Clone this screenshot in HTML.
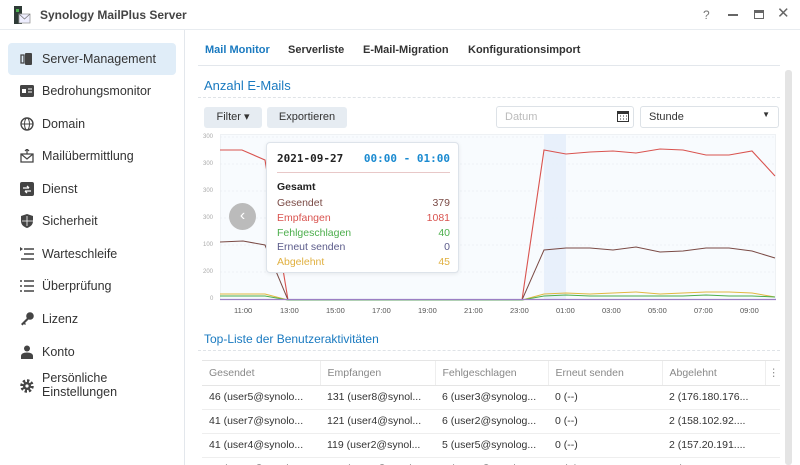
<!DOCTYPE html>
<html><head><meta charset="utf-8"><style>
*{box-sizing:border-box;margin:0;padding:0}
body{width:800px;height:465px;overflow:hidden;background:#fff;font-family:"Liberation Sans","DejaVu Sans",sans-serif;position:relative;color:#333}
.abs{position:absolute}
.title{left:40px;top:8px;font-size:12px;font-weight:bold;color:#444}
.hdrline{left:0;top:29px;width:800px;height:1px;background:#e8ecf0}
.side{left:0;top:30px;width:185px;height:435px;border-right:1px solid #e3e7ec}
.item{position:absolute;left:8px;width:168px;height:32px;font-size:12.5px;color:#333;padding-left:34px;line-height:32px}
.item.sel{background:#e0edf8;border-radius:4px}
.ic{position:absolute;left:12px;top:9px;width:14px;height:14px}
.tab{top:44px;font-size:11px;font-weight:bold;color:#333}
.btn{background:#e6ecf2;border-radius:3px;font-size:11px;color:#333;height:21px;line-height:21px;text-align:center}
.ylab{font-size:6px;color:#aaa;left:203px}
.xlab{font-size:7.5px;color:#555;top:306px}
table{border-collapse:collapse;font-size:10.5px}
td{height:24px;padding-left:7px;border-bottom:1px solid #eee;white-space:nowrap;color:#333;overflow:hidden}
tr.h td{color:#888;border-bottom:1px solid #e5e5e5;border-right:1px solid #eee}
</style></head><body>
<svg class="abs" style="left:13px;top:6px" width="18" height="18"><rect x="1" y="0" width="8" height="18" fill="#2e3a36"/><rect x="3" y="3" width="3" height="3" fill="#4caf50"/><path d="M6 8h11v9H6z" fill="#eef" stroke="#999" stroke-width=".8"/><path d="M6 8l5.5 5L17 8" fill="none" stroke="#777" stroke-width=".8"/></svg>
<div class="abs title">Synology MailPlus Server</div>
<div class="abs" style="left:703px;top:8px;font-size:12px;color:#777">?</div>
<div class="abs" style="left:728px;top:14px;width:10px;height:2px;background:#666"></div>
<div class="abs" style="left:754px;top:10px;width:10px;height:9px;border:1.5px solid #666;border-top-width:3px"></div>
<div class="abs" style="left:777px;top:4px;font-size:15px;color:#666">✕</div>
<div class="abs hdrline"></div>
<div class="abs side">
<div class="item sel" style="top:13px"><svg class="ic" viewBox="0 0 14 14"><path d="M1 3h3v8H1z" fill="none" stroke="#444" stroke-width="1.3"/><rect x="5" y="1" width="7" height="12" rx="1" fill="#444"/></svg>Server-Management</div>
<div class="item" style="top:45px"><svg class="ic" viewBox="0 0 14 14"><rect x="0" y="1" width="14" height="12" rx="1.5" fill="#444"/><rect x="2" y="5" width="4" height="4" fill="#fff"/><path d="M8 5h4M8 8h4" stroke="#fff"/></svg>Bedrohungsmonitor</div>
<div class="item" style="top:78px"><svg class="ic" viewBox="0 0 14 14"><circle cx="7" cy="7" r="6" fill="none" stroke="#444" stroke-width="1.4"/><ellipse cx="7" cy="7" rx="2.5" ry="6" fill="none" stroke="#444"/><path d="M1 7h12" stroke="#444"/></svg>Domain</div>
<div class="item" style="top:110px"><svg class="ic" viewBox="0 0 14 14"><path d="M1 5h12v8H1z" fill="none" stroke="#444" stroke-width="1.3"/><path d="M1 5l6 5 6-5M7 0v5M5 2l2-2 2 2" fill="none" stroke="#444" stroke-width="1.2"/></svg>Mailübermittlung</div>
<div class="item" style="top:143px"><svg class="ic" viewBox="0 0 14 14"><rect x="0" y="0" width="14" height="14" rx="2" fill="#444"/><path d="M3 6h6M7 4l2 2M11 9H5M7 11l-2-2" stroke="#fff" stroke-width="1.3" fill="none"/></svg>Dienst</div>
<div class="item" style="top:175px"><svg class="ic" viewBox="0 0 14 14"><path d="M7 0L13 2v5c0 4-3 6-6 7C4 13 1 11 1 7V2z" fill="#444"/><path d="M7 2v10M2 7h11" stroke="#fff" stroke-width=".8"/></svg>Sicherheit</div>
<div class="item" style="top:208px"><svg class="ic" viewBox="0 0 14 14"><path d="M4 2h10M4 7h10M1 12h13" stroke="#444" stroke-width="1.4"/><path d="M0 0l3 2-3 2z" fill="#444"/></svg>Warteschleife</div>
<div class="item" style="top:240px"><svg class="ic" viewBox="0 0 14 14"><path d="M4 2h10M4 7h10M4 12h10M0 2h2M0 7h2M0 12h2" stroke="#444" stroke-width="1.5"/></svg>Überprüfung</div>
<div class="item" style="top:273px"><svg class="ic" viewBox="0 0 14 14"><circle cx="10" cy="4" r="3.8" fill="#444"/><path d="M8 5L1 12l1.5 1.5L4 12l1 1 1-1-1-1 4-4" fill="#444"/></svg>Lizenz</div>
<div class="item" style="top:306px"><svg class="ic" viewBox="0 0 14 14"><circle cx="7" cy="3.5" r="3" fill="#444"/><path d="M1 14v-3c0-2 2-3.5 6-3.5s6 1.5 6 3.5v3z" fill="#444"/></svg>Konto</div>
<div class="item" style="top:338px;line-height:14px;height:34px;padding-top:3px"><svg class="ic" viewBox="0 0 14 14" style="top:11px"><circle cx="7" cy="7" r="5" fill="none" stroke="#444" stroke-width="3.5" stroke-dasharray="2.2 1.7"/><circle cx="7" cy="7" r="4" fill="#444"/><circle cx="7" cy="7" r="1.6" fill="#fff"/></svg>Persönliche<br>Einstellungen</div>
</div>
<div class="abs tab" style="left:205px;color:#1a7ac0">Mail Monitor</div>
<div class="abs tab" style="left:288px">Serverliste</div>
<div class="abs tab" style="left:363px">E-Mail-Migration</div>
<div class="abs tab" style="left:468px">Konfigurationsimport</div>
<div class="abs" style="left:198px;top:65px;width:582px;height:1px;background:#e3e7ec"></div>
<div class="abs" style="left:785px;top:70px;width:7px;height:395px;background:#e4e4e4;border-radius:3px"></div>
<div class="abs" style="left:204px;top:78px;font-size:13px;color:#1a7ac0">Anzahl E-Mails</div>
<div class="abs" style="left:198px;top:97px;width:582px;border-top:1px dashed #dfe3e7"></div>
<div class="abs btn" style="left:204px;top:107px;width:58px">Filter ▾</div>
<div class="abs btn" style="left:267px;top:107px;width:80px">Exportieren</div>
<div class="abs" style="left:496px;top:106px;width:138px;height:22px;border:1px solid #dde2e7;border-radius:3px;font-size:11px;color:#bbb;padding:4px 8px">Datum</div>
<svg class="abs" style="left:617px;top:111px" width="12" height="11"><rect x=".5" y=".5" width="11" height="10" fill="none" stroke="#333"/><rect x=".5" y=".5" width="11" height="2.5" fill="#333"/><path d="M3 5h1M6 5h1M9 5h1M3 8h1M6 8h1M9 8h1" stroke="#333"/></svg>
<div class="abs" style="left:640px;top:106px;width:139px;height:22px;border:1px solid #dde2e7;border-radius:3px;font-size:11px;color:#333;padding:4px 8px">Stunde<span style="position:absolute;right:8px;top:3px;font-size:8px">▼</span></div>
<div class="abs" style="left:220px;top:134px;width:556px;height:166px;background:#f8fbfe;border:1px solid #eef1f4"></div>
<svg class="abs" style="left:0;top:0" width="800" height="330">
<g stroke="#e4eaf0" stroke-dasharray="2 2" stroke-width=".6"><path d="M220 137h556M220 164h556M220 191h556M220 218h556M220 245h556M220 272h556"/></g>
<rect x="544" y="134" width="22" height="166" fill="#e3eefa" opacity=".8"/>
<polyline fill="none" stroke="#d9534f" stroke-width="1.1" points="220,150 242,150 265,160 288,300 522,300 544,150 566,154 590,152 613,151 636,153 660,149 683,150 706,155 729,155 752,151 775,176"/>
<polyline fill="none" stroke="#7a4a45" stroke-width="1" points="220,242 243,241 265,245 288,300 522,300 544,250 566,248 590,248 613,250 636,247 660,252 683,251 706,248 729,248 752,251 775,258"/>
<polyline fill="none" stroke="#e0b840" stroke-width="1" points="220,294 265,294 288,300 522,300 544,294 566,293 590,294 613,293 636,292 660,294 683,293 706,292 729,292 752,293 775,297"/>
<polyline fill="none" stroke="#4cae4c" stroke-width="1" points="220,296 265,296 288,300 522,300 544,296 566,295 590,296 613,296 636,296 660,296 683,296 706,295 729,296 752,296 775,297"/>
<path d="M220 299.5H776" stroke="#9b7fc4" stroke-width="1.2"/>
</svg>
<div class="abs ylab" style="top:134px">300</div><div class="abs ylab" style="top:161px">300</div><div class="abs ylab" style="top:188px">300</div><div class="abs ylab" style="top:215px">300</div><div class="abs ylab" style="top:242px">100</div><div class="abs ylab" style="top:269px">200</div><div class="abs ylab" style="top:296px;left:210px">0</div>
<div class="abs xlab" style="left:234px">11:00</div><div class="abs xlab" style="left:280px">13:00</div><div class="abs xlab" style="left:326px">15:00</div><div class="abs xlab" style="left:372px">17:00</div><div class="abs xlab" style="left:418px">19:00</div><div class="abs xlab" style="left:464px">21:00</div><div class="abs xlab" style="left:510px">23:00</div><div class="abs xlab" style="left:556px">01:00</div><div class="abs xlab" style="left:602px">03:00</div><div class="abs xlab" style="left:648px">05:00</div><div class="abs xlab" style="left:694px">07:00</div><div class="abs xlab" style="left:740px">09:00</div>
<div class="abs" style="left:229px;top:203px;width:27px;height:27px;border-radius:50%;background:#bbb;color:#fff;font-size:16px;text-align:center;line-height:26px">‹</div>
<div class="abs" style="left:266px;top:142px;width:193px;height:131px;background:#fff;border:1px solid #dde3ea;border-radius:4px;box-shadow:0 1px 4px rgba(0,0,0,.08);font-size:10.5px">
<div style="position:absolute;left:10px;top:9px;font-weight:bold;font-family:'DejaVu Sans Mono','Liberation Mono',monospace;font-size:11px;color:#222">2021-09-27</div>
<div style="position:absolute;right:8px;top:9px;font-weight:bold;font-family:'DejaVu Sans Mono','Liberation Mono',monospace;font-size:11px;color:#1a8ad0">00:00 - 01:00</div>
<div style="position:absolute;left:10px;right:8px;top:29px;height:1px;background:#e8c8c8"></div>
<div style="position:absolute;left:10px;top:38px;font-weight:bold;color:#222">Gesamt</div>
<div style="position:absolute;left:10px;right:8px;top:53px;line-height:14.8px">
<div style="color:#7a4a45">Gesendet<span style="float:right">379</span></div>
<div style="color:#d9534f">Empfangen<span style="float:right">1081</span></div>
<div style="color:#4cae4c">Fehlgeschlagen<span style="float:right">40</span></div>
<div style="color:#5b5b8a">Erneut senden<span style="float:right">0</span></div>
<div style="color:#e0b040">Abgelehnt<span style="float:right">45</span></div>
</div></div>
<div class="abs" style="left:204px;top:332px;font-size:12px;color:#1a7ac0">Top-Liste der Benutzeraktivitäten</div>
<div class="abs" style="left:198px;top:350px;width:582px;border-top:1px dashed #dfe3e7"></div>
<div class="abs" style="left:202px;top:360px;width:578px;height:105px;overflow:hidden;border-top:1px solid #e5e5e5">
<table style="width:578px;table-layout:fixed"><colgroup><col style="width:118px"><col style="width:115px"><col style="width:113px"><col style="width:114px"><col style="width:103px"><col style="width:15px"></colgroup>
<tr class="h"><td>Gesendet</td><td>Empfangen</td><td>Fehlgeschlagen</td><td>Erneut senden</td><td>Abgelehnt</td><td style="border-right:0;padding-left:3px">⋮</td></tr>
<tr><td>46 (user5@synolo...</td><td>131 (user8@synol...</td><td>6 (user3@synolog...</td><td>0 (--)</td><td>2 (176.180.176...</td><td></td></tr>
<tr><td>41 (user7@synolo...</td><td>121 (user4@synol...</td><td>6 (user2@synolog...</td><td>0 (--)</td><td>2 (158.102.92....</td><td></td></tr>
<tr><td>41 (user4@synolo...</td><td>119 (user2@synol...</td><td>5 (user5@synolog...</td><td>0 (--)</td><td>2 (157.20.191....</td><td></td></tr>
<tr><td>41 (user1@synolo...</td><td>116 (user7@synol...</td><td>4 (user9@synolog...</td><td>0 (--)</td><td>2 (151.156.24...</td><td></td></tr>
</table></div>
</body></html>
